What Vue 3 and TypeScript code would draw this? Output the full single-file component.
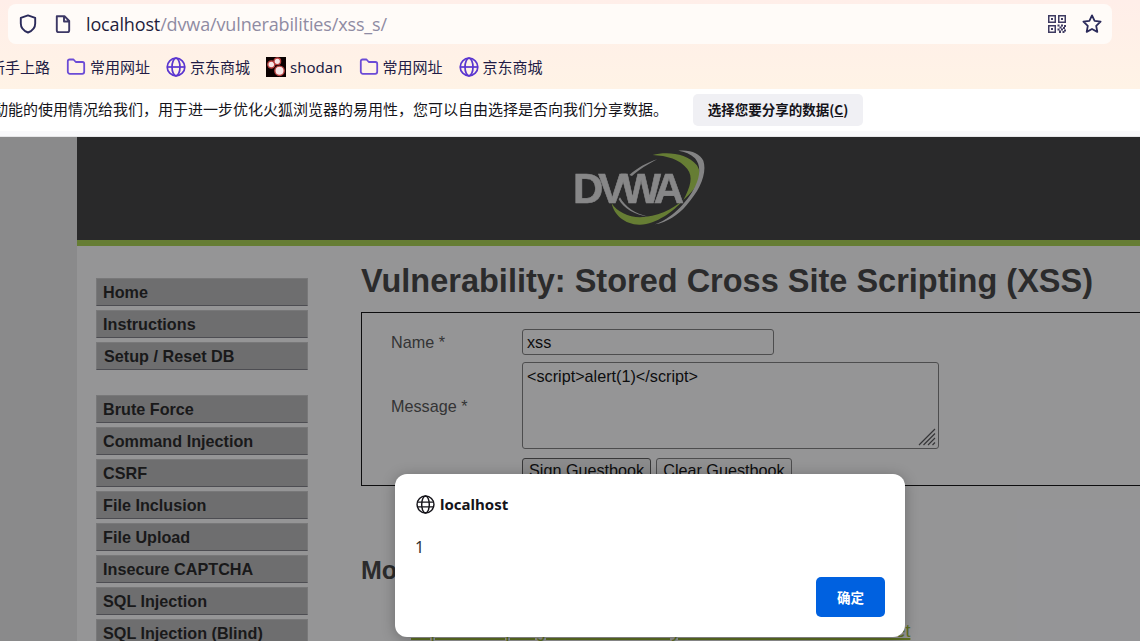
<script setup lang="ts">
interface Mark { label: string; kind: 'folder' | 'globe' | 'shodan' | 'none' }
const marks: Mark[] = [
  { label: '新手上路', kind: 'none' },
  { label: '常用网址', kind: 'folder' },
  { label: '京东商城', kind: 'globe' },
  { label: 'shodan', kind: 'shodan' },
  { label: '常用网址', kind: 'folder' },
  { label: '京东商城', kind: 'globe' },
]
const groups: string[][] = [
  ['Home', 'Instructions', 'Setup / Reset DB'],
  ['Brute Force', 'Command Injection', 'CSRF', 'File Inclusion', 'File Upload', 'Insecure CAPTCHA', 'SQL Injection', 'SQL Injection (Blind)'],
]
</script>

<template>
  <div class="screen">
    <header class="chrome">
      <div class="urlbar">
        <svg class="ico shield" viewBox="0 0 20 20"><path d="M10 1.400 2.800 3.900v5.600c0 4.400 3 7.400 7.200 9 4.200-1.600 7.200-4.600 7.200-9V3.900z" fill="none" stroke="#2b2a5a" stroke-width="1.900" stroke-linejoin="round"/></svg>
        <svg class="ico page" viewBox="0 0 20 20"><path d="M3.800 2.200h7.700L16.200 7v9.200a1.900 1.900 0 0 1-1.900 1.900H5.700a1.900 1.900 0 0 1-1.900-1.900zM11 2.200v5.300h5.200" fill="none" stroke="#3d3865" stroke-width="1.900" stroke-linejoin="round"/></svg>
        <span class="url"><span class="host">localhost</span><span class="path">/dvwa/vulnerabilities/xss_s/</span></span>
        <svg class="ico qr" viewBox="0 0 18 18">
          <path d="M0 0h8v8H0zM1.500 1.500v5h5v-5zM3 3h2v2H3zM10 0h8v8h-8zM11.500 1.500v5h5v-5zM13 3h2v2h-2zM0 10h8v8H0zM1.500 11.500v5h5v-5zM3 13h2v2H3z" fill="#3f3b62" fill-rule="evenodd"/>
          <path d="M9.500 9.500h2v2h-2zM13 9.500h2v2h-2zM16 10h2v2h-2zM11.500 11.500h2v2h-2zM15 12h2v2h-2zM9.500 13.500h2v2h-2zM13 13.500h2v2h-2zM16 14.500h2v2h-2zM11 15.500h2v2.500h-2zM14.500 16h2v2h-2z" fill="#3f3b62"/>
        </svg>
        <svg class="ico star" viewBox="0 0 20 20"><path d="M10 1.400l2.600 5.500 6 .8-4.400 4.200 1.100 6L10 15l-5.300 2.900 1.100-6L1.400 7.700l6-.8z" fill="none" stroke="#2b2a5a" stroke-width="1.800" stroke-linejoin="round"/></svg>
      </div>
      <div class="marks">
        <span v-for="(m, i) in marks" :key="i" class="mark">
          <svg v-if="m.kind === 'folder'" class="mico" viewBox="0 0 20 20"><path d="M1.800 4.200A1.700 1.700 0 0 1 3.500 2.500h4l2.300 2.500h6.700a1.700 1.700 0 0 1 1.700 1.700v8.100a2 2 0 0 1-2 2h-12.400a2 2 0 0 1-2-2z" fill="none" stroke="#6b4bd6" stroke-width="1.800" stroke-linejoin="round"/></svg>
          <svg v-else-if="m.kind === 'globe'" class="mico" viewBox="0 0 20 20"><g fill="none" stroke="#5a35d0" stroke-width="1.700"><circle cx="10" cy="10" r="8.800"/><ellipse cx="10" cy="10" rx="4" ry="8.800"/><path d="M1.200 10h17.600"/></g></svg>
          <svg v-else-if="m.kind === 'shodan'" class="mico" viewBox="0 0 20 20"><rect width="20" height="20" fill="#0a0000"/><g fill="#f6e6e6" stroke="#b8403f" stroke-width="1.400"><circle cx="5.300" cy="7.500" r="3.500"/><circle cx="11.300" cy="4.300" r="3.300"/><circle cx="13.500" cy="13.800" r="4.700"/></g></svg>
          <span class="mlabel">{{ m.label }}</span>
        </span>
      </div>
    </header>

    <div class="notice">
      <span class="ntext">动能的使用情况给我们，用于进一步优化火狐浏览器的易用性，您可以自由选择是否向我们分享数据。</span>
      <button class="nbtn">选择您要分享的数据(<u>C</u>)</button>
    </div>
    <div class="band"></div>

    <div class="viewport">
      <div class="gutter"></div>
      <div class="container">
        <div class="banner">
          <div class="logo">
            <svg class="swoosh" viewBox="0 0 600 300">
              <path d="M338 45C380 33 442 40 470 75 492 105 472 145 430 180 452 140 460 110 442 87 420 58 380 47 338 45z" fill="#a3cc45"/>
              <path d="M215 190C222 225 255 255 300 254 350 252 400 215 430 180 395 210 350 230 300 232 265 232 230 215 215 190z" fill="#a3cc45"/>
              <path d="M415 32C450 28 480 40 490 62 502 100 480 150 440 195 415 225 380 248 345 253 390 238 440 190 465 140 482 105 482 75 465 55 452 42 435 35 415 32z" fill="#d8d8d8"/>
              <path d="M268 105C290 85 320 68 352 58 325 72 295 90 276 108zM240 172C255 200 285 222 325 230 285 225 250 205 236 178z" fill="#d0d0d0"/>
            </svg>
            <span class="dvwa">DVWA</span>
          </div>
        </div>
        <div class="stripe"></div>
        <div class="body">
          <nav class="side">
            <ul v-for="(g, i) in groups" :key="i" class="group">
              <li v-for="item in g" :key="item" class="item" :class="{ shifted: item.startsWith('Setup') }">{{ item }}</li>
            </ul>
          </nav>
          <main class="main">
            <h1 class="title">Vulnerability: Stored Cross Site Scripting (XSS)</h1>
            <div class="box">
              <div class="frow namerow">
                <label class="flabel">Name *</label>
                <div class="finput">xss</div>
              </div>
              <div class="frow msgrow">
                <label class="flabel">Message *</label>
                <div class="farea">&lt;script&gt;alert(1)&lt;/script&gt;
                  <svg class="grip" viewBox="0 0 18 18"><path d="M17 1 1 17M17 5.500 5.500 17M17 10l-7 7M17 14.500 14.500 17" fill="none" stroke="#4a4a4c" stroke-width="1.200"/></svg>
                </div>
              </div>
              <div class="btns">
                <button class="fbtn active">Sign Guestbook</button>
                <button class="fbtn">Clear Guestbook</button>
              </div>
            </div>
            <h2 class="more">More Information</h2>
            <div class="links">
              <a class="lnk">https://owasp.org/www-community/xss-filter-evasion-cheatsheet</a>
            </div>
          </main>
        </div>
      </div>
      <div class="scrim"></div>
      <div class="dialog">
        <div class="dhead">
          <svg class="dglobe" viewBox="0 0 20 20"><g fill="none" stroke="#15141a" stroke-width="1.500"><circle cx="10" cy="10" r="8.900"/><ellipse cx="10" cy="10" rx="4" ry="8.900"/><path d="M1.500 7.500h17M1.500 12.500h17"/></g></svg>
          <span class="dhost">localhost</span>
        </div>
        <div class="dmsg">1</div>
        <div class="dfoot"><button class="dok">确定</button></div>
      </div>
    </div>
  </div>
</template>

<style>
html, body { margin: 0; overflow: hidden; }
</style>

<style scoped>
.screen {
  width: 1140px;
  height: 641px;
  overflow: hidden;
  display: flex;
  flex-direction: column;
  background: #fff;
}
.chrome {
  height: 89px;
  flex: none;
  background: linear-gradient(180deg, #ffeee9, #fff3e6);
  box-sizing: border-box;
  padding: 4px 28px 0 8px;
}
.urlbar {
  height: 40px;
  background: #fffbf8;
  border-radius: 8px;
  display: flex;
  align-items: center;
  box-sizing: border-box;
  padding: 0 10px;
}
.ico { flex: none; display: block; }
.shield { width: 20px; height: 20px; }
.page { width: 20px; height: 20px; margin-left: 15px; }
.url {
  margin-left: 13px;
  flex: 1;
  font: 18px "Open Sans", "Noto Sans", sans-serif;
  letter-spacing: -0.14px;
  white-space: nowrap;
}
.host { color: #1f1d3d; }
.path { color: #8f8ba3; }
.qr { width: 18px; height: 18px; }
.star { width: 20px; height: 20px; margin-left: 16px; }
.marks {
  display: flex;
  align-items: center;
  height: 45px;
  margin-left: -18px;
  gap: 16px;
  white-space: nowrap;
}
.mark { display: flex; align-items: center; gap: 4px; font: 15px "Noto Sans", "Noto Sans CJK SC", sans-serif; color: #221c45; }
.mico { width: 20px; height: 20px; flex: none; }
.notice {
  height: 42px;
  flex: none;
  background: #fff;
  display: flex;
  align-items: center;
  white-space: nowrap;
  overflow: hidden;
}
.band {
  height: 5px;
  flex: none;
  background: #f9f9fb;
  border-bottom: 1px solid #e6e6e8;
}
.ntext {
  font: 15px "Noto Sans CJK SC", sans-serif;
  color: #15141a;
  margin: 0 0 3px -7px;
  flex: none;
}
.nbtn {
  margin-left: 25px;
  width: 170px;
  height: 32px;
  flex: none;
  border: 0;
  border-radius: 5px;
  background: #f0f0f4;
  color: #15141a;
  font: 700 13.500px "Noto Sans CJK SC", sans-serif;
  padding: 0 0 2px;
}
.viewport {
  position: relative;
  flex: 1;
  min-height: 0;
  overflow: hidden;
  display: flex;
  background: #e4e4e4;
}
.gutter { width: 77px; flex: none; }
.container { flex: 1; min-width: 0; background: #f8f8f8; }
.banner {
  height: 103px;
  background: #333;
  box-sizing: border-box;
  padding: 3px 0 0 463px;
}
.logo { position: relative; width: 200px; height: 100px; filter: blur(0.5px); }
.swoosh { position: absolute; left: 0; top: 0; width: 200px; height: 100px; }
.dvwa {
  position: absolute;
  left: 33px;
  top: 25px;
  font: 700 42px/48px "Liberation Sans", sans-serif;
  letter-spacing: -5px;
  -webkit-text-stroke: 0.6px #dedede;
  color: #dedede;
}
.stripe { height: 6px; background: #a3cc45; }
.body {
  display: flex;
  align-items: flex-start;
  padding: 32px 0 0 19px;
}
.side { width: 212px; flex: none; }
.group { list-style: none; margin: 0 0 25px; padding: 0; }
.item {
  height: 28px;
  box-sizing: border-box;
  margin-bottom: 4px;
  padding-left: 6px;
  background: #b1b1b1;
  border-top: 1px solid #c4c4c4;
  border-bottom: 1px solid #75757c;
  border-right: 1px solid #c4c4c4;
  border-left: 1px solid #c4c4c4;
  font: 700 16.200px/27px "Liberation Sans", sans-serif;
  color: #161616;
}
.item.shifted { padding-left: 7px; }
.main { flex: 1; min-width: 0; margin: -16px 0 0 53px; }
.title {
  margin: 0;
  height: 50px;
  font: 700 32.500px/39px "Liberation Sans", sans-serif;
  color: #383838;
  white-space: nowrap;
}
.box {
  width: 1000px;
  height: 174px;
  box-sizing: border-box;
  border: 1px solid #000;
  padding: 16px 0 0 29px;
}
.frow { display: flex; align-items: center; }
.flabel {
  width: 131px;
  flex: none;
  font: 16.200px "Liberation Sans", sans-serif;
  color: #484848;
}
.msgrow .flabel { padding-top: 2px; }
.finput {
  width: 252px;
  height: 26px;
  box-sizing: border-box;
  border: 1px solid #767676;
  border-radius: 3px;
  padding-left: 4px;
  font: 16.200px/24px "Liberation Sans", sans-serif;
  color: #000;
}
.msgrow { margin-top: 7px; }
.farea {
  position: relative;
  width: 417px;
  height: 87px;
  box-sizing: border-box;
  border: 1px solid #767676;
  border-radius: 3px;
  padding: 3px 0 0 4px;
  font: 16.200px/20px "Liberation Sans", sans-serif;
  color: #000;
}
.grip { position: absolute; right: 2px; bottom: 2px; width: 18px; height: 18px; }
.btns { display: flex; gap: 5px; margin: 9px 0 0 131px; }
.fbtn {
  height: 25px;
  padding: 0 6px;
  box-sizing: border-box;
  border: 1px solid #767676;
  border-radius: 3px;
  background: #efefef;
  font: 16.200px "Liberation Sans", sans-serif;
  color: #000;
}
.fbtn.active { background: #e5e5e5; border-color: #4f4f4f; }
.more {
  margin: 69px 0 0;
  font: 700 25px/30px "Liberation Sans", sans-serif;
  color: #383838;
  white-space: nowrap;
}
.links {
  margin: 36px 0 0 50px;
  font: 17.700px/20px "Liberation Sans", sans-serif;
  white-space: nowrap;
}
.lnk { color: #94b525; text-decoration: underline; text-decoration-thickness: 1.500px; }
.scrim { position: absolute; inset: 0; background: rgba(28, 28, 32, 0.45); }
.dialog {
  position: absolute;
  left: 395px;
  top: 337px;
  width: 510px;
  height: 163px;
  box-sizing: border-box;
  background: #fff;
  border-radius: 12px;
  padding: 20px;
  box-shadow: 0 2px 14px rgba(0, 0, 0, 0.28);
  display: flex;
  flex-direction: column;
}
.dhead { display: flex; align-items: center; gap: 5px; height: 20px; padding-left: 1px; }
.dglobe { width: 19px; height: 19px; flex: none; }
.dhost { font: 700 15px "Noto Sans", sans-serif; color: #15141a; }
.dmsg { margin-top: 23px; font: 16px/20px "Noto Sans", sans-serif; color: #333; }
.dfoot { margin-top: auto; display: flex; justify-content: flex-end; }
.dok {
  width: 69px;
  height: 40px;
  border: 0;
  border-radius: 5px;
  background: #0061e0;
  color: #fff;
  font: 700 13.500px "Noto Sans CJK SC", sans-serif;
  padding: 0;
}
</style>
